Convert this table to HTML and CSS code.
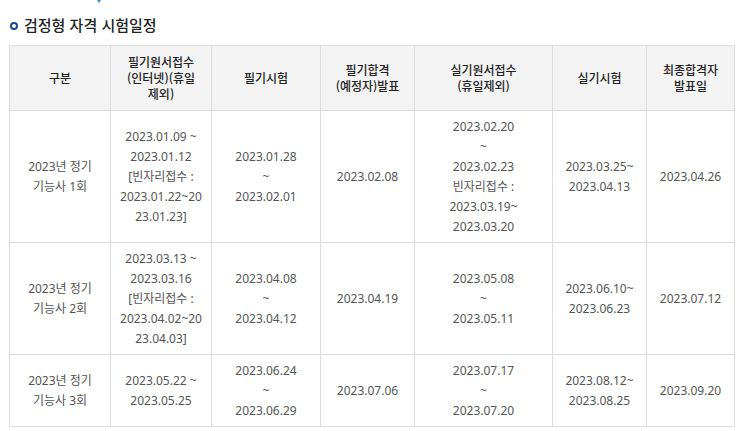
FILE: index.html
```html
<!DOCTYPE html>
<html lang="ko">
<head>
<meta charset="utf-8">
<link rel="stylesheet" href="styles.css">
</head>
<body>
<div class="page">
  <span class="top-mark"></span>
  <h2 class="title"><span class="bullet"></span>검정형 자격 시험일정</h2>
  <table class="schedule">
    <colgroup>
      <col class="c1"><col class="c2"><col class="c3"><col class="c4"><col class="c5"><col class="c6"><col class="c7">
    </colgroup>
    <thead>
      <tr>
        <th>구분</th>
        <th>필기원서접수<br>(인터넷)(휴일<br>제외)</th>
        <th>필기시험</th>
        <th>필기합격<br>(예정자)발표</th>
        <th>실기원서접수<br>(휴일제외)</th>
        <th>실기시험</th>
        <th>최종합격자<br>발표일</th>
      </tr>
    </thead>
    <tbody>
      <tr class="r1">
        <td>2023년 정기<br>기능사 1회</td>
        <td>2023.01.09 ~<br>2023.01.12<br>[빈자리접수 :<br>2023.01.22~20<br>23.01.23]</td>
        <td>2023.01.28<br>~<br>2023.02.01</td>
        <td>2023.02.08</td>
        <td>2023.02.20<br>~<br>2023.02.23<br>빈자리접수 :<br>2023.03.19~<br>2023.03.20</td>
        <td>2023.03.25~<br>2023.04.13</td>
        <td>2023.04.26</td>
      </tr>
      <tr class="r2">
        <td>2023년 정기<br>기능사 2회</td>
        <td>2023.03.13 ~<br>2023.03.16<br>[빈자리접수 :<br>2023.04.02~20<br>23.04.03]</td>
        <td>2023.04.08<br>~<br>2023.04.12</td>
        <td>2023.04.19</td>
        <td>2023.05.08<br>~<br>2023.05.11</td>
        <td>2023.06.10~<br>2023.06.23</td>
        <td>2023.07.12</td>
      </tr>
      <tr class="r3">
        <td>2023년 정기<br>기능사 3회</td>
        <td>2023.05.22 ~<br>2023.05.25</td>
        <td>2023.06.24<br>~<br>2023.06.29</td>
        <td>2023.07.06</td>
        <td>2023.07.17<br>~<br>2023.07.20</td>
        <td>2023.08.12~<br>2023.08.25</td>
        <td>2023.09.20</td>
      </tr>
    </tbody>
  </table>
</div>
</body>
</html>
```
FILE: styles.css
```css
html, body {
  margin: 0;
  padding: 0;
  background: #fff;
}
.page {
  position: relative;
  padding: 14px 0 0 9px;
  font-family: "Noto Sans", "Noto Sans CJK KR", sans-serif;
}
.top-mark {
  position: absolute;
  left: 97px;
  top: 0;
  width: 0;
  height: 0;
  border-left: 2px solid transparent;
  border-right: 2px solid transparent;
  border-top: 3px solid #2f94d8;
}
.title {
  margin: 0 0 9px 0;
  display: flex;
  align-items: center;
  gap: 6px;
  font-family: "Noto Sans CJK KR", sans-serif;
  font-size: 15px;
  font-weight: 500;
  line-height: 22px;
  color: #222;
}
.bullet {
  width: 8px;
  height: 8px;
  box-sizing: border-box;
  border: 2px solid #1c4a8c;
  border-radius: 50%;
  margin-left: 1px;
  margin-top: 1px;
}
.schedule {
  border-collapse: collapse;
  table-layout: fixed;
  width: 725px;
}
.c1 { width: 101px; }
.c2 { width: 101px; }
.c3 { width: 109px; }
.c4 { width: 94px; }
.c5 { width: 138px; }
.c6 { width: 94px; }
.c7 { width: 88px; }
.schedule th, .schedule td {
  border: 1px solid #dcdcdc;
  text-align: center;
  vertical-align: middle;
  padding: 0 2px;
}
.schedule th {
  background: #f3f3f3;
  color: #222;
  font-family: "Noto Sans CJK KR", sans-serif;
  font-weight: 500;
  font-size: 12px;
  line-height: 16px;
  height: 64px;
}
.schedule td {
  color: #555;
  font-size: 12px;
  line-height: 20px;
}
.r1 td { height: 131px; }
.r2 td { height: 111px; }
.r3 td { height: 71px; }
```
